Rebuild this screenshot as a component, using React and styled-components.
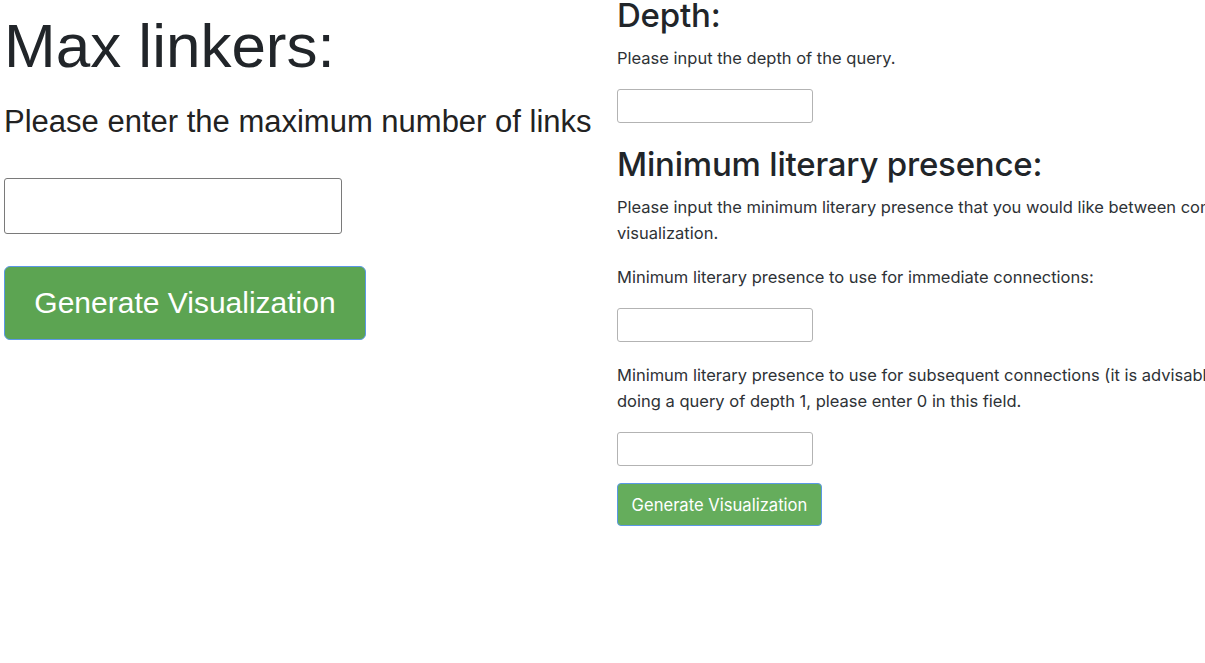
import React from 'react';
import styled, { createGlobalStyle } from 'styled-components';

const GlobalStyle = createGlobalStyle`
  html, body {
    margin: 0;
    padding: 0;
    background: #ffffff;
    overflow: hidden;
  }
  * {
    box-sizing: border-box;
  }
`;

const Page = styled.div`
  display: flex;
  width: 1205px;
  height: 663px;
  overflow: hidden;
`;

/* left half: the older, zoomed-in form */
const LeftColumn = styled.div`
  flex: 0 0 617px;
  display: flex;
  flex-direction: column;
  align-items: flex-start;
  padding-left: 4px;
  font-family: "Liberation Sans", Arial, sans-serif;
  color: #212529;
`;

const BigTitle = styled.h1`
  margin: 9px 0 0;
  font-size: 62px;
  font-weight: 400;
  line-height: 1.2;
`;

const BigText = styled.p`
  margin: 20px 0 0;
  font-size: 31px;
  line-height: 1.2;
  white-space: nowrap;
  color: #222;
`;

const BigInput = styled.input`
  margin-top: 37px;
  width: 338px;
  height: 56px;
  border: 1px solid #7a7a7a;
  border-radius: 3px;
  background: #fff;
`;

const Button = styled.button`
  font-family: ${p => (p.$big ? '"Liberation Sans", Arial, sans-serif' : 'Inter, "Liberation Sans", sans-serif')};
  font-size: ${p => (p.$big ? '30px' : '16.6px')};
  width: ${p => (p.$big ? '362px' : '205px')};
  height: ${p => (p.$big ? '74px' : '43px')};
  margin-top: ${p => (p.$big ? '32px' : '0')};
  color: #ffffff;
  background: ${p => (p.$big ? '#5ca452' : '#65ad5c')};
  border: 1px solid #5b98e6;
  border-radius: ${p => (p.$big ? '6px' : '4px')};
  padding: 0;
  text-align: center;
`;

/* right half: the bootstrap form */
const RightColumn = styled.div`
  flex: 0 0 auto;
  display: flex;
  flex-direction: column;
  align-items: flex-start;
  font-family: Inter, "Liberation Sans", sans-serif;
  color: #212529;
`;

const Heading = styled.h2`
  margin: 0 0 15px;
  font-size: 33px;
  font-weight: 500;
  line-height: 30px;
  letter-spacing: -0.2px;
`;

const Text = styled.p`
  margin: 0 0 18px;
  font-size: 16.5px;
  line-height: 26px;
  white-space: nowrap;
  color: #2e3236;
`;

const Field = styled.input`
  width: 196px;
  height: 34px;
  margin-bottom: 17px;
  border: 1px solid #b3b3b3;
  border-radius: 3px;
  background: #fff;

  & + ${Heading} {
    margin-top: 9px;
  }
  & + ${Text} {
    margin-top: 3px;
  }
`;

export default function App() {
  return (
    <Page>
      <GlobalStyle />
      <LeftColumn>
        <BigTitle>Max linkers:</BigTitle>
        <BigText>Please enter the maximum number of links</BigText>
        <BigInput type="text" />
        <Button $big>Generate Visualization</Button>
      </LeftColumn>

      <RightColumn>
        <Heading>Depth:</Heading>
        <Text>Please input the depth of the query.</Text>
        <Field type="text" />
        <Heading>Minimum literary presence:</Heading>
        <Text>
          Please input the minimum literary presence that you would like between connected terms in the
          <br />
          visualization.
        </Text>
        <Text>Minimum literary presence to use for immediate connections:</Text>
        <Field type="text" />
        <Text>
          Minimum literary presence to use for subsequent connections (it is advisable to use a lower value). If you are
          <br />
          doing a query of depth 1, please enter 0 in this field.
        </Text>
        <Field type="text" />
        <Button>Generate Visualization</Button>
      </RightColumn>
    </Page>
  );
}
